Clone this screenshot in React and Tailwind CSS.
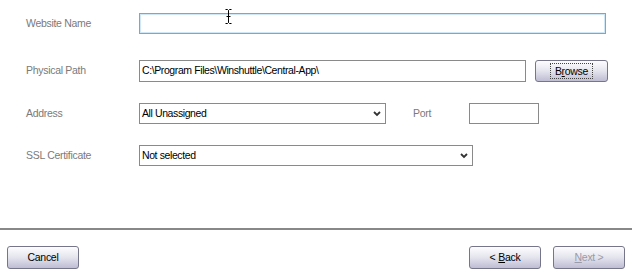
import React from "react";

const font = { fontFamily: '"Liberation Sans", Arial, sans-serif' };

function Chevron() {
  return (
    <svg width="8" height="6" viewBox="0 0 8 6" className="shrink-0">
      <path d="M1 1 L4 4 L7 1" stroke="#333" strokeWidth="1.8" fill="none" />
    </svg>
  );
}

function XPButton({ children, className = "", disabled = false }) {
  return (
    <div
      className={`flex items-center justify-center rounded-[3px] border border-[#76768a] bg-gradient-to-b from-[#fdfdff] via-[#e4e4ee] to-[#bebdd3] text-[10.5px] tracking-[-0.3px] ${disabled ? "text-[#9a9aa8]" : "text-black"} ${className}`}
    >
      {children}
    </div>
  );
}

const label = "w-[139px] pl-[26px] text-[10.5px] tracking-[-0.3px] text-[#7a7a7a]";
const val = "text-[10.5px] tracking-[-0.4px] text-black";

export default function App() {
  return (
    <div className="relative h-[277px] w-[632px] bg-white" style={font}>
      <div className="flex flex-col pt-[13px]">
        <div className="flex h-[21px] items-center">
          <div className={label}>Website Name</div>
          <div className="h-[21px] w-[467px] border border-[#5ab3e8] shadow-[inset_0_0_0_1px_#cfe8f8] bg-white" />
        </div>
        <div className="mt-[26px] flex h-[22px] items-center">
          <div className={label}>Physical Path</div>
          <div className={`flex h-[22px] w-[387px] items-center border border-[#8a8a8a] pl-[2px] ${val}`}>
            C:\Program Files\Winshuttle\Central-App\
          </div>
          <XPButton className="ml-[9px] h-[22px] w-[73px]">
            <span className="border border-dotted border-[#444] px-[4px] py-[1px] leading-[12px]">
              B<span className="underline">r</span>owse
            </span>
          </XPButton>
        </div>
        <div className="mt-[21px] flex h-[21px] items-center">
          <div className={label}>Address</div>
          <div className={`flex h-[21px] w-[247px] items-center justify-between border border-[#8a8a8a] pl-[2px] pr-[4px] ${val}`}>
            <span>All Unassigned</span>
            <Chevron />
          </div>
          <div className="w-[83px] pl-[27px] text-[10.5px] tracking-[-0.3px] text-[#7a7a7a]">Port</div>
          <div className="h-[21px] w-[70px] border border-[#8a8a8a]" />
        </div>
        <div className="mt-[21px] flex h-[21px] items-center">
          <div className={label}>SSL Certificate</div>
          <div className={`flex h-[21px] w-[334px] items-center justify-between border border-[#8a8a8a] pl-[2px] pr-[4px] ${val}`}>
            <span>Not selected</span>
            <Chevron />
          </div>
        </div>
      </div>

      <div className="mt-[62px] h-[2px] w-full bg-[#888888]" />

      <div className="mt-[16px] flex items-center px-[7px]">
        <XPButton className="h-[23px] w-[72px]">Cancel</XPButton>
        <div className="flex-1" />
        <XPButton className="h-[23px] w-[72px]">
          &lt; <span className="ml-[3px] underline">B</span>ack
        </XPButton>
        <XPButton className="ml-[12px] h-[23px] w-[72px]" disabled>
          <span className="underline">N</span>ext &gt;
        </XPButton>
      </div>

      <svg className="absolute left-[225px] top-[9px]" width="7" height="15" viewBox="0 0 7 15">
        <path d="M0.5 0.5 H2.5 L3.5 1.5 L4.5 0.5 H6.5 M3.5 1.5 V13.5 M0.5 14.5 H2.5 L3.5 13.5 L4.5 14.5 H6.5 M1.5 7.5 H5.5" stroke="#000" strokeWidth="1" fill="none" />
      </svg>
    </div>
  );
}
